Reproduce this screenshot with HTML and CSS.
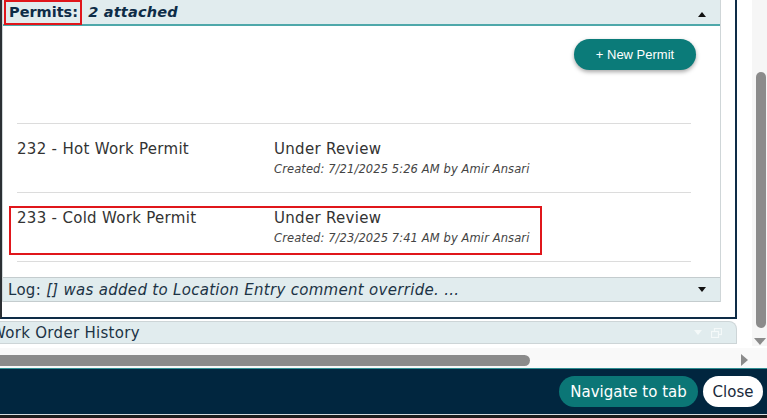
FILE: index.html
```html
<!DOCTYPE html>
<html lang="en">
<head>
    <meta charset="UTF-8">
    <meta name="viewport" content="width=device-width, initial-scale=1.0">
    <title>Permits</title>
    <link rel="stylesheet" href="styles.css">
</head>
<body>
    <div id="screen">
        <div class="scroller">
            <div class="main">
                <div class="panel">
                    <div class="section">
                        <div class="section-head">
                            <span class="head-title"><span class="mark">Permits:</span> <em>2 attached</em></span>
                            <span class="caret caret-up"></span>
                        </div>
                        <div class="section-body">
                            <div class="actions">
                                <button class="btn-new">+ New Permit</button>
                            </div>
                            <ul class="permit-list">
                                <li class="permit-row">
                                    <div class="permit-main">
                                        <div class="permit-name">232 - Hot Work Permit</div>
                                        <div class="permit-status">
                                            <div class="status">Under Review</div>
                                            <div class="created">Created: 7/21/2025 5:26 AM by Amir Ansari</div>
                                        </div>
                                    </div>
                                </li>
                                <li class="permit-row">
                                    <div class="permit-main selected">
                                        <div class="permit-name">233 - Cold Work Permit</div>
                                        <div class="permit-status">
                                            <div class="status">Under Review</div>
                                            <div class="created">Created: 7/23/2025 7:41 AM by Amir Ansari</div>
                                        </div>
                                    </div>
                                </li>
                            </ul>
                        </div>
                        <div class="log-bar">
                            <span class="log-text">Log: <em>[] was added to Location Entry comment override. ...</em></span>
                            <span class="caret caret-down"></span>
                        </div>
                    </div>
                </div>
                <div class="history-bar">
                    <span class="history-title">Work Order History</span>
                    <span class="history-icons">
                        <span class="caret caret-down light"></span>
                        <svg width="11" height="10" viewBox="0 0 11 10">
                            <rect x="3.5" y="0.5" width="7" height="6" fill="none" stroke="#f4f9f9" stroke-width="1.2"/>
                            <rect x="0.5" y="3.5" width="7" height="6" fill="#e1ecee" stroke="#f4f9f9" stroke-width="1.2"/>
                        </svg>
                    </span>
                </div>
            </div>
            <div class="vscroll">
                <div class="vthumb"></div>
                <div class="varrow"></div>
            </div>
        </div>
        <div class="hscroll">
            <div class="hthumb"></div>
            <div class="harrow"></div>
        </div>
        <div class="footer">
            <button class="btn-nav">Navigate to tab</button>
            <button class="btn-close">Close</button>
        </div>
        <div class="edge"></div>
    </div>
</body>
</html>
```

FILE: styles.css
```css
*{
    box-sizing: border-box;
}
body{
    margin: 0;
    font-family: "DejaVu Sans", Verdana, sans-serif;
    background-color: #ffffff;
}
#screen{
    width: 767px;
    height: 418px;
    overflow: hidden;
}
.scroller{
    height: 348px;
    display: flex;
}
.main{
    width: 752px;
    overflow: hidden;
}

/* permits panel */
.panel{
    width: 737px;
    height: 319px;
    border-left: 2px solid #2b2f33;
    border-right: 2px solid #0e2c47;
    border-bottom: 2px solid #0e2c47;
    padding-right: 14px;
}
.section{
    border-left: 1px solid #cfd6d8;
    border-right: 1px solid #cfd6d8;
}
.section-head{
    height: 26px;
    display: flex;
    justify-content: space-between;
    align-items: flex-start;
    padding-left: 1px;
    padding-right: 14px;
    background-color: #e1ecee;
    border-bottom: 2px solid #4ea8aa;
    color: #0e2c47;
    font-size: 14.5px;
    font-weight: bold;
}
.head-title{
    line-height: 21px;
}
.mark{
    display: inline-block;
    border: 2px solid #e0161b;
    padding: 0 2px 0 3px;
    height: 25px;
}
.head-title em{
    margin-left: 1px;
    letter-spacing: 0.2px;
}
.caret{
    width: 0;
    height: 0;
    border-left: 4px solid transparent;
    border-right: 4px solid transparent;
}
.caret-up{
    margin-top: 12px;
    border-bottom: 5px solid #111111;
}
.caret-down{
    border-top: 5px solid #111111;
}
.caret-down.light{
    border-top-color: #f4f9f9;
}

.section-body{
    padding-top: 13px;
    padding-bottom: 15px;
}
.actions{
    display: flex;
    justify-content: flex-end;
    padding-right: 24px;
}
.btn-new{
    height: 31px;
    width: 122px;
    border: none;
    border-radius: 16px;
    background-color: #0b7b79;
    color: #ffffff;
    font-family: "Liberation Sans", Arial, sans-serif;
    font-size: 13px;
    box-shadow: 0 2px 4px rgba(0,0,0,0.35);
}
.permit-list{
    list-style: none;
    margin: 53px 29px 0 14px;
    padding: 0;
    border-top: 1px solid #dcdcdc;
}
.permit-row{
    padding: 13px 0 6px 0;
    border-bottom: 1px solid #dcdcdc;
}
.permit-main{
    display: inline-flex;
    margin-left: -8px;
    border: 2px solid transparent;
    padding: 0 11px 7px 6px;
    color: #333333;
}
.permit-main.selected{
    border-color: #e0161b;
}
.permit-name{
    width: 257px;
    font-size: 15px;
    line-height: 20px;
    letter-spacing: 0.3px;
}
.permit-status{
    width: 255px;
}
.status{
    font-size: 15px;
    line-height: 20px;
    letter-spacing: 0.3px;
    margin-bottom: 2px;
}
.created{
    font-size: 11.5px;
    line-height: 16px;
    letter-spacing: 0.1px;
    font-style: italic;
    color: #444444;
    white-space: nowrap;
}

.log-bar{
    height: 25px;
    display: flex;
    justify-content: space-between;
    align-items: center;
    padding-left: 5px;
    padding-right: 14px;
    background-color: #e1ecee;
    border-top: 1px solid #c4ccce;
    border-bottom: 1px solid #c4ccce;
    color: #1c3345;
    font-size: 15px;
    letter-spacing: 0.3px;
}

/* collapsed history section */
.history-bar{
    width: 737px;
    height: 23px;
    margin-top: 2px;
    display: flex;
    justify-content: space-between;
    align-items: center;
    background-color: #e1ecee;
    border: 1px solid #cdd5d7;
    border-left: none;
    border-top-right-radius: 8px;
    padding-right: 14px;
    overflow: hidden;
}
.history-title{
    font-size: 15px;
    letter-spacing: 0.3px;
    color: #1c3345;
    margin-left: -9px;
    white-space: nowrap;
}
.history-icons{
    display: flex;
    align-items: center;
    gap: 9px;
}

/* scrollbars */
.vscroll{
    width: 15px;
    height: 346px;
    background-color: #f6f6f6;
    padding-top: 72px;
}
.vthumb{
    width: 10px;
    height: 256px;
    margin-left: 4px;
    border-radius: 5px;
    background-color: #8b8b8b;
}
.varrow{
    width: 0;
    height: 0;
    margin: 10px 0 0 2px;
    border-left: 6px solid transparent;
    border-right: 6px solid transparent;
    border-top: 7px solid #8b8b8b;
}
.hscroll{
    height: 20px;
    display: flex;
    align-items: center;
    justify-content: space-between;
    padding-top: 4px;
    padding-right: 19px;
    background-color: #f9f9f9;
}
.hthumb{
    width: 530px;
    height: 11px;
    border-radius: 0 6px 6px 0;
    background-color: #8b8b8b;
}
.harrow{
    width: 0;
    height: 0;
    border-top: 6px solid transparent;
    border-bottom: 6px solid transparent;
    border-left: 7px solid #8b8b8b;
}

/* bottom bar */
.footer{
    height: 47px;
    display: flex;
    justify-content: flex-end;
    align-items: center;
    gap: 5px;
    padding-right: 4px;
    background-color: #01263f;
    border-top: 1px solid #2f8d92;
    border-bottom: 1px solid #d5dcdf;
}
.footer button{
    height: 31px;
    border: none;
    border-radius: 16px;
    font-family: "DejaVu Sans", Verdana, sans-serif;
    font-size: 15px;
}
.btn-nav{
    width: 139px;
    background-color: #0b7676;
    color: #ffffff;
}
.btn-close{
    width: 60px;
    padding: 0;
    background-color: #ffffff;
    color: #1a2a3a;
}
.edge{
    height: 3px;
    background-color: #1c1c1c;
}
```
